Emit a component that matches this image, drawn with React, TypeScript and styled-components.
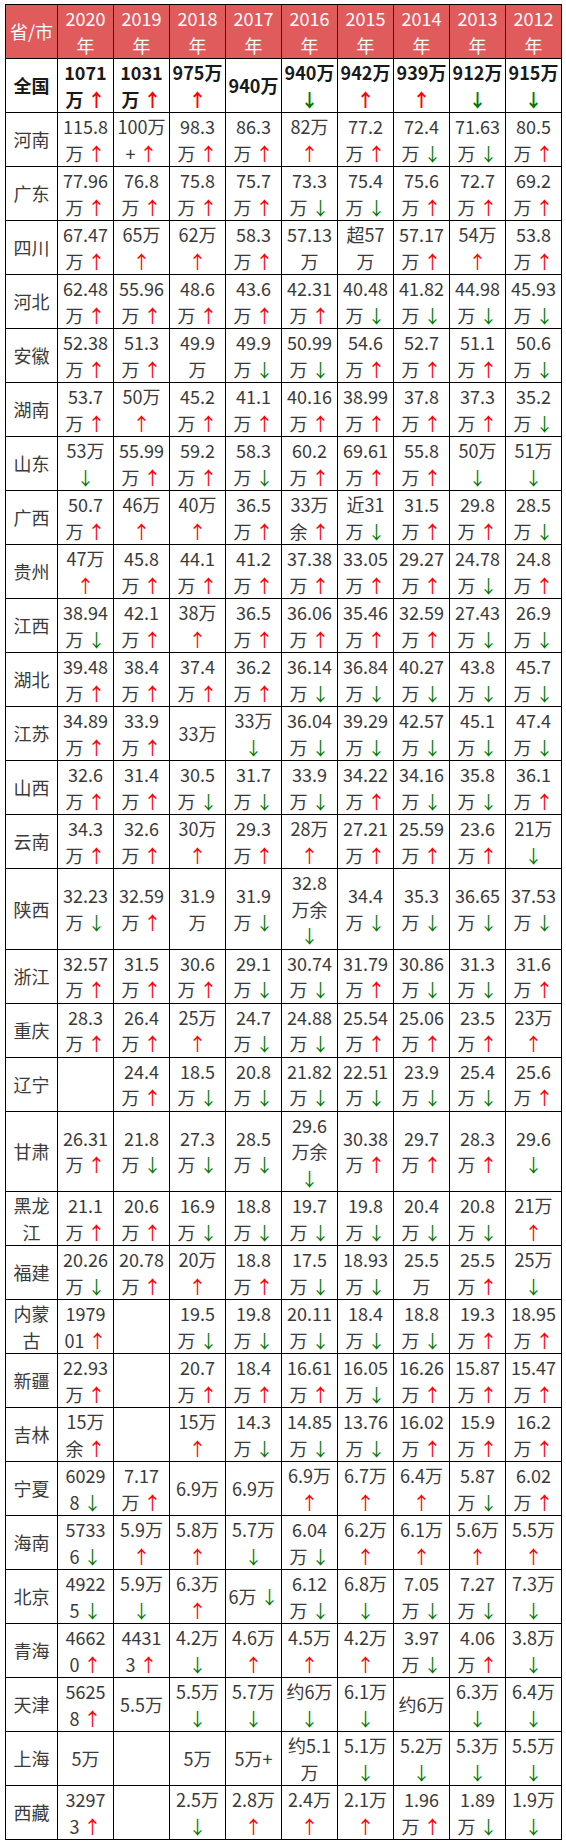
import React from 'react';
import styled, { createGlobalStyle, css } from 'styled-components';

const GlobalStyle = createGlobalStyle`
  html, body {
    margin: 0;
    padding: 0;
    background: #ffffff;
  }
  body {
    font-family: "Noto Sans CJK SC", "Noto Sans", sans-serif;
  }
`;

const YEARS = ['2020', '2019', '2018', '2017', '2016', '2015', '2014', '2013', '2012'];

// each cell: lines split by "|"
const ROWS: [string, string[]][] = [
  ['全国', ['1071|万↑', '1031|万↑', '975万|↑', '940万', '940万|↓', '942万|↑', '939万|↑', '912万|↓', '915万|↓']],
  ['河南', ['115.8|万↑', '100万|+↑', '98.3|万↑', '86.3|万↑', '82万|↑', '77.2|万↑', '72.4|万↓', '71.63|万↓', '80.5|万↑']],
  ['广东', ['77.96|万↑', '76.8|万↑', '75.8|万↑', '75.7|万↑', '73.3|万↓', '75.4|万↓', '75.6|万↑', '72.7|万↑', '69.2|万↑']],
  ['四川', ['67.47|万↑', '65万|↑', '62万|↑', '58.3|万↑', '57.13|万', '超57|万', '57.17|万↑', '54万|↑', '53.8|万↑']],
  ['河北', ['62.48|万↑', '55.96|万↑', '48.6|万↑', '43.6|万↑', '42.31|万↑', '40.48|万↓', '41.82|万↓', '44.98|万↓', '45.93|万↓']],
  ['安徽', ['52.38|万↑', '51.3|万↑', '49.9|万', '49.9|万↓', '50.99|万↓', '54.6|万↑', '52.7|万↑', '51.1|万↑', '50.6|万↓']],
  ['湖南', ['53.7|万↑', '50万|↑', '45.2|万↑', '41.1|万↑', '40.16|万↑', '38.99|万↑', '37.8|万↑', '37.3|万↑', '35.2|万↓']],
  ['山东', ['53万|↓', '55.99|万↑', '59.2|万↑', '58.3|万↓', '60.2|万↑', '69.61|万↑', '55.8|万↑', '50万|↓', '51万|↓']],
  ['广西', ['50.7|万↑', '46万|↑', '40万|↑', '36.5|万↑', '33万|余↑', '近31|万↓', '31.5|万↑', '29.8|万↑', '28.5|万↓']],
  ['贵州', ['47万|↑', '45.8|万↑', '44.1|万↑', '41.2|万↑', '37.38|万↑', '33.05|万↑', '29.27|万↑', '24.78|万↓', '24.8|万↑']],
  ['江西', ['38.94|万↓', '42.1|万↑', '38万|↑', '36.5|万↑', '36.06|万↑', '35.46|万↑', '32.59|万↑', '27.43|万↓', '26.9|万↓']],
  ['湖北', ['39.48|万↑', '38.4|万↑', '37.4|万↑', '36.2|万↑', '36.14|万↓', '36.84|万↓', '40.27|万↓', '43.8|万↓', '45.7|万↓']],
  ['江苏', ['34.89|万↑', '33.9|万↑', '33万', '33万|↓', '36.04|万↓', '39.29|万↓', '42.57|万↓', '45.1|万↓', '47.4|万↓']],
  ['山西', ['32.6|万↑', '31.4|万↑', '30.5|万↓', '31.7|万↓', '33.9|万↓', '34.22|万↑', '34.16|万↓', '35.8|万↓', '36.1|万↑']],
  ['云南', ['34.3|万↑', '32.6|万↑', '30万|↑', '29.3|万↑', '28万|↑', '27.21|万↑', '25.59|万↑', '23.6|万↑', '21万|↓']],
  ['陕西', ['32.23|万↓', '32.59|万↑', '31.9|万', '31.9|万↓', '32.8|万余|↓', '34.4|万↓', '35.3|万↓', '36.65|万↓', '37.53|万↓']],
  ['浙江', ['32.57|万↑', '31.5|万↑', '30.6|万↑', '29.1|万↓', '30.74|万↓', '31.79|万↑', '30.86|万↓', '31.3|万↓', '31.6|万↑']],
  ['重庆', ['28.3|万↑', '26.4|万↑', '25万|↑', '24.7|万↓', '24.88|万↓', '25.54|万↑', '25.06|万↑', '23.5|万↑', '23万|↑']],
  ['辽宁', ['', '24.4|万↑', '18.5|万↓', '20.8|万↓', '21.82|万↓', '22.51|万↓', '23.9|万↓', '25.4|万↓', '25.6|万↑']],
  ['甘肃', ['26.31|万↑', '21.8|万↓', '27.3|万↓', '28.5|万↓', '29.6|万余|↓', '30.38|万↑', '29.7|万↑', '28.3|万↑', '29.6|↓']],
  ['黑龙|江', ['21.1|万↑', '20.6|万↑', '16.9|万↓', '18.8|万↓', '19.7|万↓', '19.8|万↓', '20.4|万↓', '20.8|万↓', '21万|↑']],
  ['福建', ['20.26|万↓', '20.78|万↑', '20万|↑', '18.8|万↑', '17.5|万↓', '18.93|万↓', '25.5|万', '25.5|万↑', '25万|↓']],
  ['内蒙|古', ['1979|01↑', '', '19.5|万↓', '19.8|万↓', '20.11|万↓', '18.4|万↓', '18.8|万↓', '19.3|万↑', '18.95|万↑']],
  ['新疆', ['22.93|万↑', '', '20.7|万↑', '18.4|万↑', '16.61|万↑', '16.05|万↓', '16.26|万↑', '15.87|万↑', '15.47|万↑']],
  ['吉林', ['15万|余↑', '', '15万|↑', '14.3|万↓', '14.85|万↓', '13.76|万↓', '16.02|万↑', '15.9|万↑', '16.2|万↑']],
  ['宁夏', ['6029|8↓', '7.17|万↑', '6.9万', '6.9万', '6.9万|↑', '6.7万|↑', '6.4万|↑', '5.87|万↓', '6.02|万↑']],
  ['海南', ['5733|6↓', '5.9万|↑', '5.8万|↑', '5.7万|↓', '6.04|万↓', '6.2万|↑', '6.1万|↑', '5.6万|↑', '5.5万|↑']],
  ['北京', ['4922|5↓', '5.9万|↓', '6.3万|↑', '6万↓', '6.12|万↓', '6.8万|↓', '7.05|万↓', '7.27|万↓', '7.3万|↓']],
  ['青海', ['4662|0↑', '4431|3↑', '4.2万|↓', '4.6万|↑', '4.5万|↑', '4.2万|↑', '3.97|万↓', '4.06|万↑', '3.8万|↓']],
  ['天津', ['5625|8↑', '5.5万', '5.5万|↓', '5.7万|↓', '约6万|↓', '6.1万|↓', '约6万', '6.3万|↓', '6.4万|↓']],
  ['上海', ['5万', '', '5万', '5万+', '约5.1|万', '5.1万|↓', '5.2万|↓', '5.3万|↓', '5.5万|↓']],
  ['西藏', ['3297|3↑', '', '2.5万|↓', '2.8万|↑', '2.4万|↑', '2.1万|↑', '1.96|万↑', '1.89|万↓', '1.9万|↓']],
];

const renderLine = (line: string) =>
  line.split(/([↑↓])/).map((part, i) => {
    if (part === '↑') return <Arrow key={i} dir="up" spaced={i > 0 && line.length > 1}>↑</Arrow>;
    if (part === '↓') return <Arrow key={i} dir="down" spaced={i > 0 && line.length > 1}>↓</Arrow>;
    return part;
  });

const renderCell = (text: string) =>
  text.split('|').map((line, i) => <Line key={i}>{renderLine(line)}</Line>);

export default function App() {
  return (
    <>
      <GlobalStyle />
      <Page>
        <Table>
          <colgroup>
            <col style={{ width: 52 }} />
            {YEARS.map(y => (
              <col key={y} style={{ width: 56 }} />
            ))}
          </colgroup>
          <thead>
            <tr>
              <HeadCell>省/市</HeadCell>
              {YEARS.map(y => (
                <HeadCell key={y}>
                  <Line>{y}</Line>
                  <Line>年</Line>
                </HeadCell>
              ))}
            </tr>
          </thead>
          <tbody>
            {ROWS.map(([name, cells], r) => (
              <tr key={name}>
                <NameCell bold={r === 0}>{renderCell(name)}</NameCell>
                {cells.map((c, i) => (
                  <Cell key={i} bold={r === 0}>
                    {renderCell(c)}
                  </Cell>
                ))}
              </tr>
            ))}
          </tbody>
        </Table>
      </Page>
    </>
  );
}

const Page = styled.div`
  padding: 4px 0 0 5px;
`;

const Table = styled.table`
  border-collapse: collapse;
  table-layout: fixed;
  width: 557px;
  font-size: 18px;
  line-height: 26.5px;
`;

const baseCell = css`
  border: 1px solid #000;
  padding: 0;
  height: 53px;
  box-sizing: border-box;
  text-align: center;
  vertical-align: middle;
`;

const HeadCell = styled.th`
  ${baseCell};
  background: #e05c5c;
  color: #ffffff;
  font-weight: normal;
`;

const NameCell = styled.td<{ bold?: boolean }>`
  ${baseCell};
  color: ${({ bold }) => (bold ? '#1a1a1a' : '#3a3a3a')};
  font-weight: ${({ bold }) => (bold ? 700 : 400)};
`;

const Cell = styled.td<{ bold?: boolean }>`
  ${baseCell};
  color: ${({ bold }) => (bold ? '#1a1a1a' : '#3a3a3a')};
  font-weight: ${({ bold }) => (bold ? 700 : 400)};
`;

const Line = styled.div`
  height: 26.5px;
  line-height: 26.5px;
  white-space: nowrap;
`;

const Arrow = styled.span<{ dir: 'up' | 'down'; spaced?: boolean }>`
  color: ${({ dir }) => (dir === 'up' ? '#ff0000' : '#007a00')};
  margin-left: ${({ spaced }) => (spaced ? '4px' : '0')};
`;
